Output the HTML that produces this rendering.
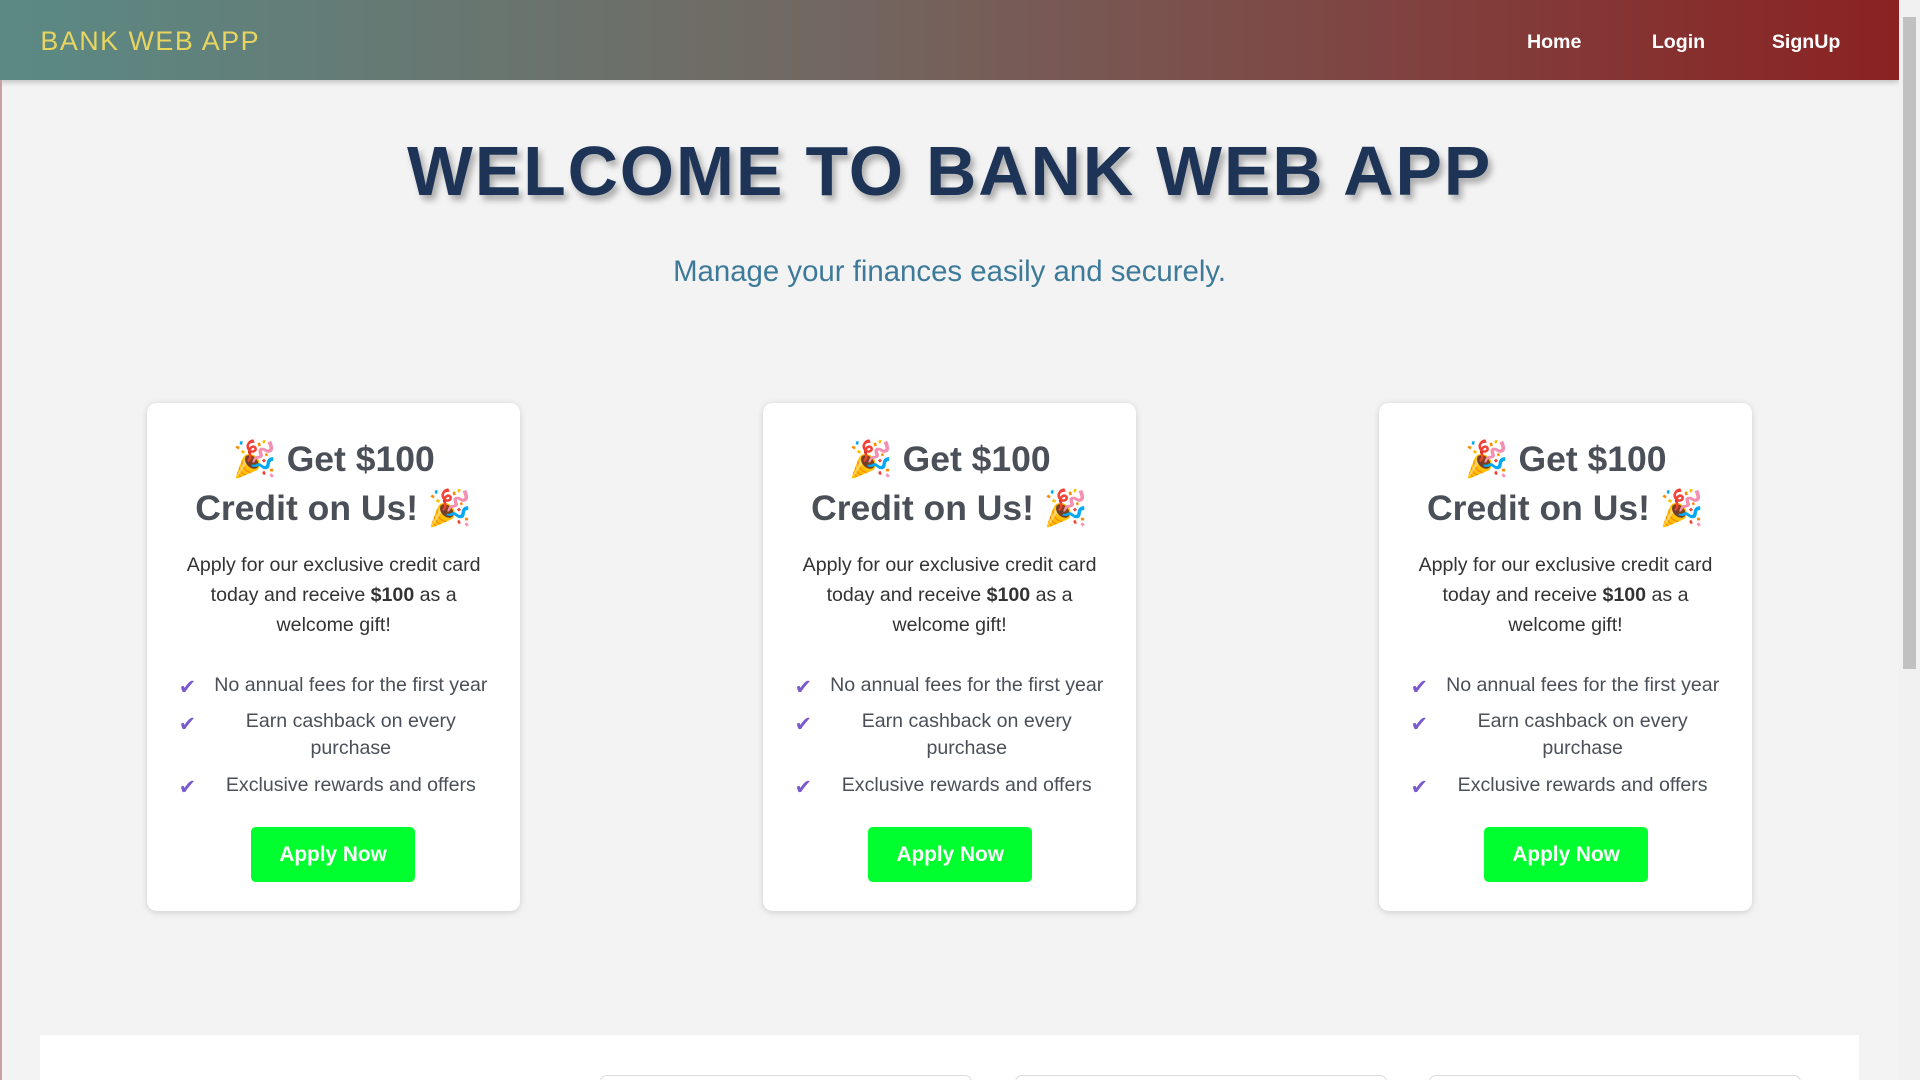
<!DOCTYPE html>
<html><head><meta charset="utf-8"><style>
html{zoom:1.22449}
body{margin:0;width:1568px;height:882px;overflow:hidden;background:#f3f3f3;font-family:"Liberation Sans",sans-serif;position:relative}
.nav{position:absolute;left:0;top:0;width:1551px;height:65px;background:linear-gradient(90deg,#5b8a85,#736660 45%,#8b2222);box-shadow:0 2px 4px rgba(0,0,0,.2)}
.logo{position:absolute;left:33px;top:21px;color:#e8d560;font-size:22px;letter-spacing:1.2px}
.nav a{position:absolute;top:25px;color:#fff;font-weight:bold;font-size:16px;text-decoration:none}
.edge{position:absolute;left:0;top:65px;width:2px;height:817px;background:#c9a0a0}
.sb{position:absolute;right:0;top:0;width:17px;height:882px;background:#f1f1f1}
.sb div{position:absolute;left:3px;top:14px;width:11px;height:532px;background:#c1c1c1}
h1{position:absolute;left:0;width:1551px;top:107px;margin:0;text-align:center;font-size:57px;font-weight:900;color:#1e3456;letter-spacing:1.5px;text-shadow:3px 4px 5px rgba(0,0,0,.3)}
.sub{position:absolute;left:0;width:1551px;top:208px;text-align:center;font-size:24px;color:#3d7a9a}
.card{position:absolute;top:329px;width:305px;height:415px;background:#fff;border-radius:8px;box-shadow:0 1px 5px rgba(0,0,0,.15);text-align:center;color:#4a4f58}
.card h2{margin:26px 36px 0;font-size:29px;line-height:40px;color:#4a4f58}
.card p{margin:14px 24px 0;font-size:16px;line-height:24.5px;color:#333}
.card ul{list-style:none;margin:26px 0 0;padding:0 24px 0 26px;font-size:16px}
.card li{position:relative;padding-left:26px;line-height:22px;margin-bottom:8px}
.card li:before{content:"✔";position:absolute;left:0;top:2px;color:#7b5bcc;font-size:17px;font-family:"DejaVu Sans",sans-serif}
.btn{position:absolute;left:85px;top:346px;width:134px;height:45px;background:#00ff2f;border-radius:4px;color:#fff;font-weight:bold;font-size:17px;line-height:45px}
.bottom{position:absolute;left:33px;top:845px;width:1485px;height:37px;background:#fff;overflow:hidden}
.bottom div{position:absolute;top:33px;width:302px;height:10px;border:1px solid #ddd;border-radius:6px}
</style></head><body>
<div class="nav"><div class="logo">BANK WEB APP</div><a style="left:1247px">Home</a><a style="left:1349px">Login</a><a style="left:1447px">SignUp</a></div>
<div class="edge"></div>
<h1>WELCOME TO BANK WEB APP</h1>
<div class="sub">Manage your finances easily and securely.</div>
<div class="card" style="left:120px"><h2>🎉 Get $100 Credit on Us! 🎉</h2><p>Apply for our exclusive credit card today and receive <b>$100</b> as a welcome gift!</p><ul><li>No annual fees for the first year</li><li>Earn cashback on every purchase</li><li>Exclusive rewards and offers</li></ul><div class="btn">Apply Now</div></div>
<div class="card" style="left:623px"><h2>🎉 Get $100 Credit on Us! 🎉</h2><p>Apply for our exclusive credit card today and receive <b>$100</b> as a welcome gift!</p><ul><li>No annual fees for the first year</li><li>Earn cashback on every purchase</li><li>Exclusive rewards and offers</li></ul><div class="btn" style="left:86px">Apply Now</div></div>
<div class="card" style="left:1126px"><h2>🎉 Get $100 Credit on Us! 🎉</h2><p>Apply for our exclusive credit card today and receive <b>$100</b> as a welcome gift!</p><ul><li>No annual fees for the first year</li><li>Earn cashback on every purchase</li><li>Exclusive rewards and offers</li></ul><div class="btn" style="left:86px">Apply Now</div></div>
<div class="bottom"><div style="left:457px"></div><div style="left:796px"></div><div style="left:1134px"></div></div>
<div class="sb"><div></div></div>
</body></html>
